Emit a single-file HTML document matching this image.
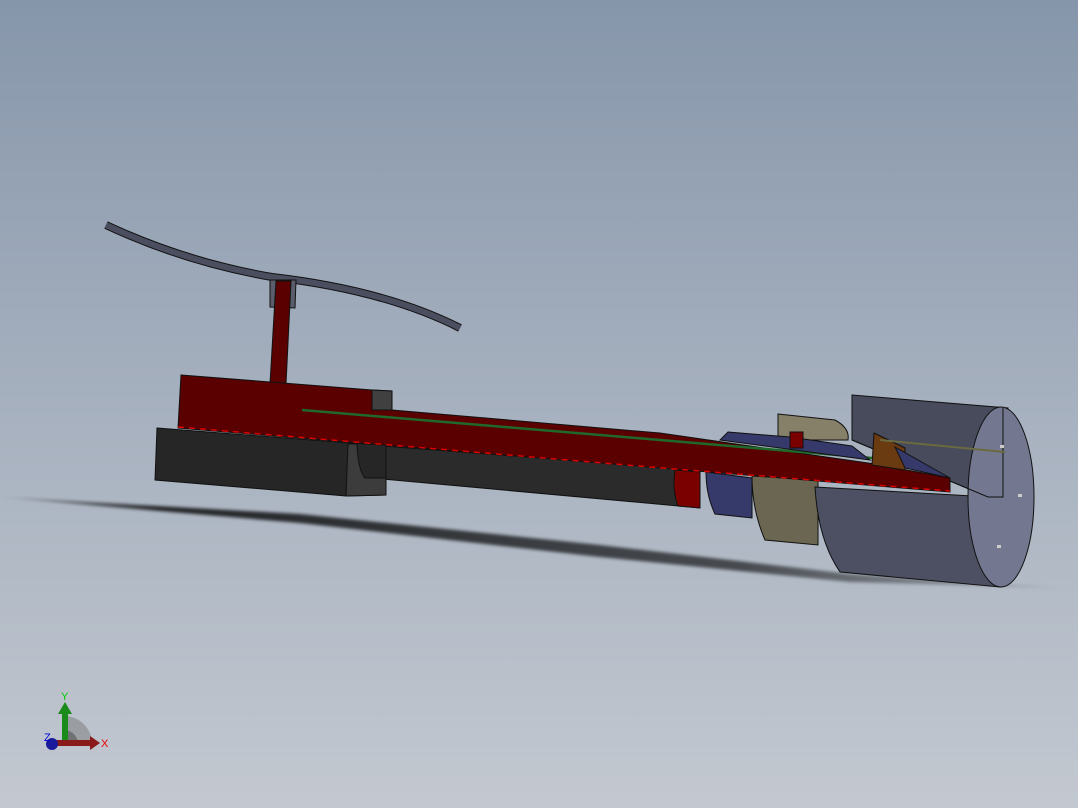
<!DOCTYPE html>
<html><head><meta charset="utf-8"><style>
html,body{margin:0;padding:0;width:1078px;height:808px;overflow:hidden}
body{background:linear-gradient(#8696aa 0%,#a3aebd 45%,#c3c8d0 100%)}
svg{position:absolute;left:0;top:0}
</style></head><body>
<svg width="1078" height="808" viewBox="0 0 1078 808">
<defs>
<linearGradient id="sh" x1="0" y1="0" x2="1" y2="0">
<stop offset="0" stop-color="#000" stop-opacity="0.2"/>
<stop offset="0.15" stop-color="#000" stop-opacity="0.8"/>
<stop offset="0.7" stop-color="#000" stop-opacity="0.6"/>
<stop offset="1" stop-color="#000" stop-opacity="0.1"/>
</linearGradient>
<filter id="bl"><feGaussianBlur stdDeviation="1.5"/></filter>
</defs>
<!-- shadow -->
<path d="M0,497 L300,514 L600,545 L850,574 L1060,588 L850,582 L600,557 L300,523 L100,506 Z" fill="url(#sh)" filter="url(#bl)"/>
<!-- spring -->
<path d="M106,225 Q185,262 272,277 Q385,290 460,328" fill="none" stroke="#111" stroke-width="8"/>
<path d="M106,225 Q185,262 272,277 Q385,290 460,328" fill="none" stroke="#4a4e5e" stroke-width="6"/>
<!-- flange -->
<path d="M270,280 L296,280 L295,308 L270,307 Z" fill="#5a5e6c" stroke="#111" stroke-width="1"/>
<!-- post -->
<path d="M276,281 L291,281 L286,384 L270,384 Z" fill="#5a0000" stroke="#111" stroke-width="1"/>
<!-- dark tube -->
<path d="M356,444 L700,470 L700,508 L372,478 Q358,470 356,444 Z" fill="#2b2b2b" stroke="#111" stroke-width="1"/>
<!-- dark block -->
<path d="M157,428 L350,443 L386,445 L386,495 L346,496 L155,480 Z" fill="#262626" stroke="#111" stroke-width="1"/>
<path d="M348,444 L357,444 Q358,470 365,478 L386,478 L386,495 L346,496 Z" fill="#3c3c3c" stroke="#111" stroke-width="1"/>
<!-- red ring, blue ring -->
<path d="M675,470 L700,472 L700,508 L678,506 Q672,490 675,470 Z" fill="#7a0000" stroke="#111" stroke-width="1"/>
<path d="M706,472 L752,478 L752,518 L715,514 Q706,495 706,472 Z" fill="#363a6a" stroke="#111" stroke-width="1"/>
<!-- beige cylinder -->
<path d="M752,476 L818,480 L818,545 L765,540 Q752,510 752,476 Z" fill="#6a6651" stroke="#111" stroke-width="1"/>
<path d="M778,414 L835,420 Q850,428 848,440 L778,440 Z" fill="#878069" stroke="#111" stroke-width="1"/>
<!-- big gray cylinder -->
<path d="M852,395 L1008,408 L1005,498 L988,497 L852,440 Z" fill="#474b5b" stroke="#111" stroke-width="1"/>
<path d="M815,487 L990,497 L1000,587 L840,572 Q818,540 815,487 Z" fill="#4c5062" stroke="#111" stroke-width="1"/>
<ellipse cx="1001" cy="497" rx="33" ry="90" fill="#737890" stroke="#111" stroke-width="1"/>
<path d="M852,440 L988,497 L1003,497 L1003,408" fill="none" stroke="#111" stroke-width="1"/>
<rect x="1000" y="445" width="4" height="3" fill="#ccc"/>
<rect x="1018" y="494" width="4" height="3" fill="#ccc"/>
<rect x="997" y="545" width="4" height="3" fill="#ccc"/>
<!-- beam -->
<path d="M181,375 L372,390 L392,391 L392,410 L660,433 L875,464 L950,478 L950,492 L178,428 Z" fill="#5a0000" stroke="#111" stroke-width="1"/>
<path d="M372,390 L392,391 L392,410 L372,410 Z" fill="#404040" stroke="#111" stroke-width="1"/>
<path d="M178,427 L650,467 L950,491" fill="none" stroke="#d00" stroke-width="1.5" stroke-dasharray="6,5"/>
<path d="M302,410 L660,440 L872,458" fill="none" stroke="#1f6a2a" stroke-width="2.5"/>
<path d="M728,432 L790,437 L852,446 L870,460 L720,440 Z" fill="#363a6a" stroke="#111" stroke-width="1"/>
<path d="M790,432 L803,432 L803,448 L790,448 Z" fill="#7a0000" stroke="#111" stroke-width="1"/>
<!-- wedge -->
<path d="M874,433 L905,448 L905,470 L872,465 Z" fill="#6a3a10" stroke="#111" stroke-width="1"/>
<path d="M895,447 L950,478 L905,468 Z" fill="#363a6a" stroke="#111" stroke-width="1"/>
<path d="M880,440 L1005,452" stroke="#6a6a40" stroke-width="2"/>
<!-- triad -->
<path d="M64,744 L64,716 A28,28 0 0 1 92,744 Z" fill="#777" opacity="0.5"/>
<path d="M64,744 L64,730 A14,14 0 0 1 78,744 Z" fill="#444" opacity="0.5"/>
<rect x="62" y="712" width="6" height="32" fill="#1a8a1a"/>
<path d="M58,714 L65,702 L72,714 Z" fill="#1a8a1a"/>
<rect x="55" y="740" width="36" height="6" fill="#8a1a1a"/>
<path d="M90,736 L100,743 L90,750 Z" fill="#8a1a1a"/>
<circle cx="52" cy="744" r="6" fill="#1a1a9a"/>
<text x="61" y="700" font-family="Liberation Sans,sans-serif" font-size="11" fill="#0c0">Y</text>
<text x="101" y="747" font-family="Liberation Sans,sans-serif" font-size="11" fill="#e00">X</text>
<text x="44" y="741" font-family="Liberation Sans,sans-serif" font-size="11" fill="#00d">Z</text>
</svg>
</body></html>
